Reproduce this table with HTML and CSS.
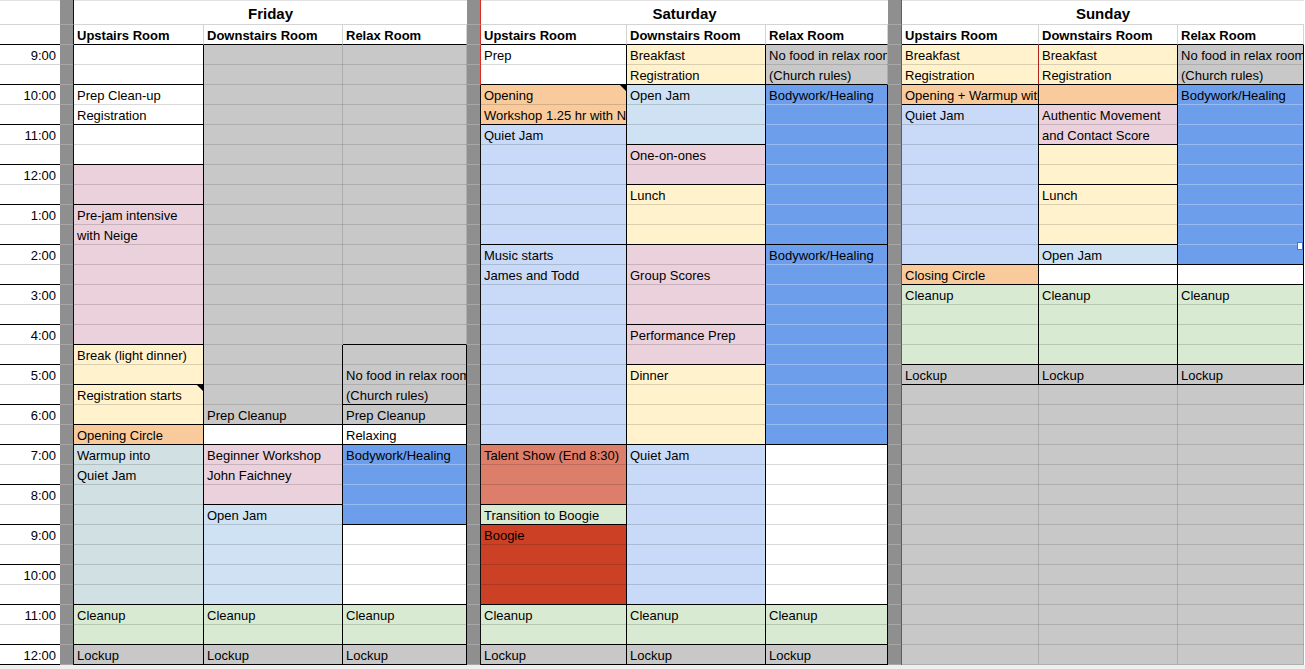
FILE: index.html
```html
<!DOCTYPE html>
<html>
<head>
<meta charset="utf-8">
<title>Schedule</title>
<link rel="stylesheet" href="styles.css">
</head>
<body>
<div class="sheet">
  <div class="timecol">
    <div class="hd1"></div>
    <div class="hd2"></div>
    <div class="hour"><div class="tl">9:00</div></div>
    <div class="hour"><div class="tl">10:00</div></div>
    <div class="hour"><div class="tl">11:00</div></div>
    <div class="hour"><div class="tl">12:00</div></div>
    <div class="hour"><div class="tl">1:00</div></div>
    <div class="hour"><div class="tl">2:00</div></div>
    <div class="hour"><div class="tl">3:00</div></div>
    <div class="hour"><div class="tl">4:00</div></div>
    <div class="hour"><div class="tl">5:00</div></div>
    <div class="hour"><div class="tl">6:00</div></div>
    <div class="hour"><div class="tl">7:00</div></div>
    <div class="hour"><div class="tl">8:00</div></div>
    <div class="hour"><div class="tl">9:00</div></div>
    <div class="hour"><div class="tl">10:00</div></div>
    <div class="hour"><div class="tl">11:00</div></div>
    <div class="hour last"><div class="tl">12:00</div></div>
  </div>

  <div class="sep">
    <div class="sh1"></div>
    <div class="sh2"></div>
    <div class="sbody h31"></div>
  </div>

  <div class="day">
    <div class="dayname">Friday</div>
    <div class="rooms">
      <div class="room wfu">
        <div class="rh">Upstairs Room</div>
        <div class="b h2 w"></div>
        <div class="b h2 w"><div class="t">Prep Clean-up</div><div class="t">Registration</div></div>
        <div class="b h2 w"></div>
        <div class="b h2 pk"></div>
        <div class="b h7 pk"><div class="t">Pre-jam intensive</div><div class="t">with Neige</div></div>
        <div class="b h2 yl"><div class="t">Break (light dinner)</div></div>
        <div class="b h2 yl cm"><div class="t">Registration starts</div></div>
        <div class="b h1 or"><div class="t">Opening Circle</div></div>
        <div class="b h8 tq"><div class="t">Warmup into</div><div class="t">Quiet Jam</div></div>
        <div class="b h2 gr"><div class="t">Cleanup</div></div>
        <div class="b h1 gy"><div class="t">Lockup</div></div>
      </div>
      <div class="room wfd">
        <div class="rh">Downstairs Room</div>
        <div class="b h15 gy sr sb"></div>
        <div class="b h4 gy"><div class="t"></div><div class="t"></div><div class="t"></div><div class="t">Prep Cleanup</div></div>
        <div class="b h1 w"></div>
        <div class="b h3 pk"><div class="t">Beginner Workshop</div><div class="t">John Faichney</div></div>
        <div class="b h5 lb"><div class="t">Open Jam</div></div>
        <div class="b h2 gr"><div class="t">Cleanup</div></div>
        <div class="b h1 gy"><div class="t">Lockup</div></div>
      </div>
      <div class="room wfr">
        <div class="rh">Relax Room</div>
        <div class="b h15 gy sr"></div>
        <div class="b h3 gy"><div class="t"></div><div class="t">No food in relax room</div><div class="t">(Church rules)</div></div>
        <div class="b h1 gy"><div class="t">Prep Cleanup</div></div>
        <div class="b h1 w"><div class="t">Relaxing</div></div>
        <div class="b h4 bl"><div class="t">Bodywork/Healing</div></div>
        <div class="b h4 w"></div>
        <div class="b h2 gr"><div class="t">Cleanup</div></div>
        <div class="b h1 gy"><div class="t">Lockup</div></div>
      </div>
    </div>
  </div>

  <div class="sep">
    <div class="sh1 red"></div>
    <div class="sh2 red"></div>
    <div class="sbody h2 red"></div>
    <div class="sbody h29"></div>
  </div>

  <div class="day">
    <div class="dayname">Saturday</div>
    <div class="rooms">
      <div class="room wsu">
        <div class="rh">Upstairs Room</div>
        <div class="b h2 w"><div class="t">Prep</div></div>
        <div class="b h2 or cm"><div class="t">Opening</div><div class="t">Workshop 1.25 hr with Neige</div></div>
        <div class="b h6 qb"><div class="t">Quiet Jam</div></div>
        <div class="b h10 qb"><div class="t">Music starts</div><div class="t">James and Todd</div></div>
        <div class="b h3 sa"><div class="t">Talent Show (End 8:30)</div></div>
        <div class="b h1 gr"><div class="t">Transition to Boogie</div></div>
        <div class="b h4 rd"><div class="t">Boogie</div></div>
        <div class="b h2 gr"><div class="t">Cleanup</div></div>
        <div class="b h1 gy"><div class="t">Lockup</div></div>
      </div>
      <div class="room wsd">
        <div class="rh">Downstairs Room</div>
        <div class="b h2 yl"><div class="t">Breakfast</div><div class="t">Registration</div></div>
        <div class="b h3 lb"><div class="t">Open Jam</div></div>
        <div class="b h2 pk"><div class="t">One-on-ones</div></div>
        <div class="b h3 yl"><div class="t">Lunch</div></div>
        <div class="b h4 pk"><div class="t"></div><div class="t">Group Scores</div></div>
        <div class="b h2 pk"><div class="t">Performance Prep</div></div>
        <div class="b h4 yl"><div class="t">Dinner</div></div>
        <div class="b h8 qb"><div class="t">Quiet Jam</div></div>
        <div class="b h2 gr"><div class="t">Cleanup</div></div>
        <div class="b h1 gy"><div class="t">Lockup</div></div>
      </div>
      <div class="room wsr">
        <div class="rh">Relax Room</div>
        <div class="b h2 gy sr"><div class="t">No food in relax room</div><div class="t">(Church rules)</div></div>
        <div class="b h8 bl"><div class="t">Bodywork/Healing</div></div>
        <div class="b h10 bl"><div class="t">Bodywork/Healing</div></div>
        <div class="b h8 w"></div>
        <div class="b h2 gr"><div class="t">Cleanup</div></div>
        <div class="b h1 gy"><div class="t">Lockup</div></div>
      </div>
    </div>
  </div>

  <div class="sep">
    <div class="sh1 red"></div>
    <div class="sh2 red"></div>
    <div class="sbody h31 red"></div>
  </div>

  <div class="day">
    <div class="dayname">Sunday</div>
    <div class="rooms">
      <div class="room wnu">
        <div class="rh">Upstairs Room</div>
        <div class="b h2 yl rr"><div class="t">Breakfast</div><div class="t">Registration</div></div>
        <div class="b h1 or"><div class="t">Opening + Warmup with Neige</div></div>
        <div class="b h8 qb"><div class="t">Quiet Jam</div></div>
        <div class="b h1 or"><div class="t">Closing Circle</div></div>
        <div class="b h4 gr"><div class="t">Cleanup</div></div>
        <div class="b h1 gy"><div class="t">Lockup</div></div>
        <div class="b h14 gy sr sb"></div>
      </div>
      <div class="room wnd">
        <div class="rh">Downstairs Room</div>
        <div class="b h2 yl"><div class="t">Breakfast</div><div class="t">Registration</div></div>
        <div class="b h1 or"></div>
        <div class="b h2 pk"><div class="t">Authentic Movement</div><div class="t">and Contact Score</div></div>
        <div class="b h2 yl"></div>
        <div class="b h3 yl"><div class="t">Lunch</div></div>
        <div class="b h1 lb"><div class="t">Open Jam</div></div>
        <div class="b h1 w"></div>
        <div class="b h4 gr"><div class="t">Cleanup</div></div>
        <div class="b h1 gy"><div class="t">Lockup</div></div>
        <div class="b h14 gy sr sb"></div>
      </div>
      <div class="room wnr">
        <div class="rh">Relax Room</div>
        <div class="b h2 gy"><div class="t">No food in relax room</div><div class="t">(Church rules)</div></div>
        <div class="b h9 bl sel"><div class="t">Bodywork/Healing</div></div>
        <div class="b h1 w"></div>
        <div class="b h4 gr"><div class="t">Cleanup</div></div>
        <div class="b h1 gy"><div class="t">Lockup</div></div>
        <div class="b h14 gy sr sb"></div>
      </div>
    </div>
  </div>
</div>
<div class="footer"></div>
</body>
</html>
```

FILE: styles.css
```css
* { box-sizing: border-box; }
html, body { margin: 0; padding: 0; background: #fff; }
body {
  width: 1305px;
  height: 669px;
  overflow: hidden;
  font-family: "Liberation Sans", Arial, sans-serif;
  font-size: 13px;
  color: #000;
}

.sheet { display: flex; align-items: flex-start; height: 665px; }
.footer { height: 4px; background: #efefef; }

/* time column */
.timecol { width: 60px; flex: none; }
.hd1 { height: 25px; border-bottom: 1px solid #d4d4d4; border-top: 1px solid #e2e2e2; }
.hd2 { height: 20px; border-bottom: 1px solid #000; }
.hour {
  height: 40px;
  border-bottom: 1px solid #000;
  background: linear-gradient(to bottom, #fff 0 19px, #d4d4d4 19px 20px, #fff 20px);
}
.hour.last { height: 20px; background: #fff; }
.tl { height: 20px; line-height: 22px; text-align: right; padding-right: 4px; overflow: hidden; }

/* grey separator columns */
.sep { width: 14px; flex: none; display: flex; flex-direction: column; background: #8f8f8f; }
.sep > div { border-right: 1px solid #111; }
.sep > .red { border-right-color: #e02a1f; }
.sh1 { height: 25px; border-bottom: 1px solid #a7a7a7; }
.sh2 { height: 20px; border-bottom: 1px solid #a7a7a7; }
.sbody { background-image: repeating-linear-gradient(to bottom, transparent 0 19px, #a7a7a7 19px 20px); }

/* days */
.day { flex: none; display: flex; flex-direction: column; }
.dayname {
  height: 25px;
  border-top: 1px solid #e2e2e2;
  border-bottom: 1px solid #d4d4d4;
  font-weight: bold;
  font-size: 15px;
  line-height: 25px;
  text-align: center;
}
.rooms { display: flex; }
.room { display: flex; flex-direction: column; flex: none; }
.rh {
  height: 20px;
  border-bottom: 1px solid #000;
  border-right: 1px solid #d4d4d4;
  padding-left: 3px;
  font-weight: bold;
  line-height: 21px;
  white-space: nowrap;
  overflow: hidden;
}

.wfu { width: 130px; }
.wfd { width: 139px; }
.wfr { width: 124px; }
.wsu { width: 146px; }
.wsd { width: 139px; }
.wsr { width: 122px; }
.wnu { width: 137px; }
.wnd { width: 139px; }
.wnr { width: 126px; }

/* schedule blocks */
.b {
  --ln: rgba(0, 0, 0, 0.15);
  position: relative;
  overflow: hidden;
  border-right: 1px solid #000;
  border-bottom: 1px solid #000;
  background-image: repeating-linear-gradient(to bottom, transparent 0 19px, var(--ln) 19px 20px);
}
.b.sr { border-right-color: var(--ln); }
.b.sb { border-bottom-color: var(--ln); }
.b.rr { border-right-color: #b0241c; }
.t { height: 20px; line-height: 22px; padding-left: 3px; white-space: nowrap; overflow: hidden; }

.h1 { height: 20px; }
.h2 { height: 40px; }
.h3 { height: 60px; }
.h4 { height: 80px; }
.h5 { height: 100px; }
.h6 { height: 120px; }
.h7 { height: 140px; }
.h8 { height: 160px; }
.h9 { height: 180px; }
.h10 { height: 200px; }
.h14 { height: 280px; }
.h15 { height: 300px; }
.h29 { height: 580px; }
.h31 { height: 620px; }

/* fills */
.w  { background-color: #fff; }
.gy { background-color: #c8c8c8; --ln: rgba(0, 0, 0, 0.13); }
.pk { background-color: #ead1dc; }
.yl { background-color: #fff2cc; }
.lb { background-color: #cfe2f3; }
.qb { background-color: #c9daf8; }
.bl { background-color: #6d9eeb; --ln: rgba(255, 255, 255, 0.3); }
.or { background-color: #f9cb9c; }
.gr { background-color: #d9ead3; }
.sa { background-color: #dd7e6b; }
.rd { background-color: #cc4125; }
.tq { background-color: #d0e0e3; }

/* comment marker */
.cm::after {
  content: "";
  position: absolute;
  top: 0;
  right: 0;
  border-style: solid;
  border-width: 0 6px 6px 0;
  border-color: transparent #000 transparent transparent;
}

/* selection fill handle */
.sel::after {
  content: "";
  position: absolute;
  top: 157px;
  right: 0;
  width: 4px;
  height: 6px;
  background: #fff;
  border: 1px solid #3a78d8;
}
```
